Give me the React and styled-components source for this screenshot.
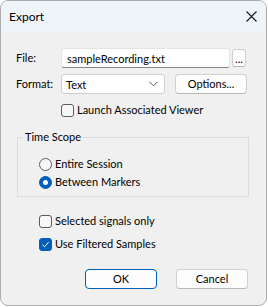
import React from "react";
import styled, { createGlobalStyle } from "styled-components";

const GlobalStyle = createGlobalStyle`
    body {
        margin: 0;
        background: #ffffff;
        font-family: Lato, "Noto Sans", sans-serif;
        font-size: 11px;
        color: #000;
    }
`

const Window = styled.div`
    width: 267px;
    height: 306px;
    box-sizing: border-box;
    border: 1px solid #adadad;
    border-radius: 8px;
    overflow: hidden;
    background: #f0f0f0;
    display: flex;
    flex-direction: column;
`

const TitleBar = styled.div`
    height: 31px;
    flex-shrink: 0;
    background: #eff4f9;
    display: flex;
    align-items: center;
    justify-content: space-between;
    padding: 0 9px 0 8px;
`

const Title = styled.span`
    font-size: 12px;
    line-height: 16px;
`

const Content = styled.div`
    padding: 16px 0 0 15px;
    display: flex;
    flex-direction: column;
`

const Row = styled.div`
    display: flex;
    align-items: center;
    height: ${props => props.h || 20}px;
    margin-top: ${props => props.mt || 0}px;
    margin-left: ${props => props.ml || 0}px;
`

const Label = styled.span`
    width: 45px;
    flex-shrink: 0;
    line-height: 16px;
`

const TextInput = styled.div`
    width: 169px;
    height: 20px;
    box-sizing: border-box;
    background: #fff;
    border: 1px solid #e5e5e5;
    border-bottom: 1px solid #868686;
    border-radius: 3px;
    padding: 0 5px;
    display: flex;
    align-items: center;
`

const SmallButton = styled.div`
    width: 14px;
    height: 18px;
    margin-left: 2px;
    box-sizing: border-box;
    background: #fdfdfd;
    border: 1px solid #d0d0d0;
    border-bottom-color: #b5b5b5;
    border-radius: 3px;
    display: flex;
    align-items: flex-end;
    justify-content: center;
    line-height: 14px;
    font-size: 11px;
`

const Select = styled.div`
    width: 104px;
    height: 20px;
    box-sizing: border-box;
    background: #fff;
    border: 1px solid #cfcfcf;
    border-radius: 3px;
    padding: 0 6px 0 4px;
    display: flex;
    align-items: center;
    justify-content: space-between;
`

const Button = styled.div`
    width: ${props => props.w || 72}px;
    height: 20px;
    margin-left: ${props => props.ml || 0}px;
    box-sizing: border-box;
    background: #fdfdfd;
    border: 1px solid ${props => props.primary ? "#005fb8" : "#d0d0d0"};
    border-bottom-color: ${props => props.primary ? "#005fb8" : "#b8b8b8"};
    border-radius: 4px;
    display: flex;
    align-items: center;
    justify-content: center;
    line-height: 16px;
`

const Option = styled.label`
    display: flex;
    align-items: center;
    height: 18px;
    gap: 3px;
    line-height: 16px;
    margin-left: ${props => props.ml || 0}px;
`

const Box = styled.span`
    width: 13px;
    height: 13px;
    box-sizing: border-box;
    border-radius: 3px;
    border: 1px solid ${props => props.checked ? "#005fb8" : "#5c5c5c"};
    background: ${props => props.checked ? "#005fb8" : "#f7f7f7"};
    display: flex;
    align-items: center;
    justify-content: center;
    flex-shrink: 0;
`

const Radio = styled.span`
    width: 13px;
    height: 13px;
    box-sizing: border-box;
    border-radius: 50%;
    border: 1px solid ${props => props.checked ? "#005fb8" : "#5c5c5c"};
    background: ${props => props.checked ? "#005fb8" : "#f7f7f7"};
    display: flex;
    align-items: center;
    justify-content: center;
    flex-shrink: 0;

    &::after {
        content: "";
        display: ${props => props.checked ? "block" : "none"};
        width: 5px;
        height: 5px;
        border-radius: 50%;
        background: #fff;
    }
`

const Group = styled.fieldset`
    width: 232px;
    box-sizing: border-box;
    margin: 10px 0 0 1px;
    padding: 10px 0 5px 5px;
    border: 1px solid #dcdcdc;
    min-width: 0;
`

const Legend = styled.legend`
    padding: 0 2px;
    line-height: 16px;
`

const Footer = styled.div`
    display: flex;
    margin: 16px 0 0 69px;
`

function Check({ checked, children }) {
    return (
        <Option>
            <Box checked={checked}>
                {checked && (
                    <svg width="9" height="9" viewBox="0 0 9 9">
                        <path d="M1.5 4.8 L3.6 6.8 L7.6 2.2" fill="none" stroke="#fff" strokeWidth="1" />
                    </svg>
                )}
            </Box>
            {children}
        </Option>
    )
}

export default function App() {
    return (
        <Window>
            <GlobalStyle />
            <TitleBar>
                <Title>Export</Title>
                <svg width="11" height="11" viewBox="0 0 11 11">
                    <path d="M0.5 0.5 L10.5 10.5 M10.5 0.5 L0.5 10.5" stroke="#1a1a1a" strokeWidth="1.1" />
                </svg>
            </TitleBar>
            <Content>
                <Row>
                    <Label>File:</Label>
                    <TextInput>sampleRecording.txt</TextInput>
                    <SmallButton>...</SmallButton>
                </Row>
                <Row mt={6}>
                    <Label>Format:</Label>
                    <Select>
                        <span>Text</span>
                        <svg width="9" height="6" viewBox="0 0 9 6">
                            <path d="M0.5 0.8 L4.5 4.8 L8.5 0.8" fill="none" stroke="#555" strokeWidth="1" />
                        </svg>
                    </Select>
                    <Button ml={10}>Options...</Button>
                </Row>
                <Row h={18} mt={7} ml={45}>
                    <Check>Launch Associated Viewer</Check>
                </Row>
                <Group>
                    <Legend>Time Scope</Legend>
                    <Option ml={16}><Radio />Entire Session</Option>
                    <Option ml={16}><Radio checked />Between Markers</Option>
                </Group>
                <Row h={18} mt={15} ml={23}>
                    <Check>Selected signals only</Check>
                </Row>
                <Row h={18} mt={5} ml={23}>
                    <Check checked>Use Filtered Samples</Check>
                </Row>
                <Footer>
                    <Button primary>OK</Button>
                    <Button ml={19}>Cancel</Button>
                </Footer>
            </Content>
        </Window>
    )
}
